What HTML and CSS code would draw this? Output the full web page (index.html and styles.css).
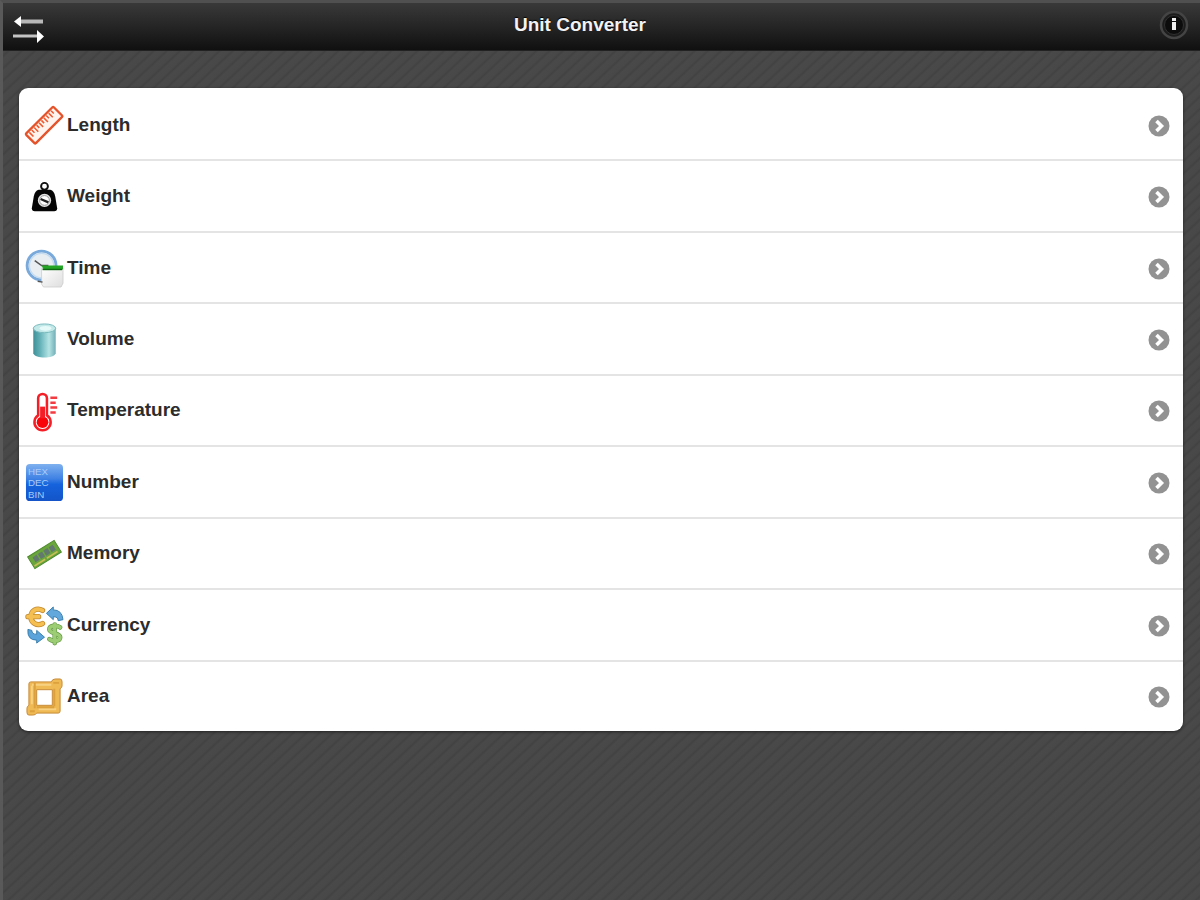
FILE: index.html
```html
<!DOCTYPE html>
<html lang="en">
<head>
<meta charset="utf-8">
<meta name="viewport" content="width=device-width, initial-scale=1">
<title>Unit Converter</title>
<link rel="stylesheet" href="styles.css">
</head>
<body>
<svg class="defs" aria-hidden="true">
  <defs>
    <symbol id="chevron" viewBox="0 0 22 22"><circle cx="11" cy="11" r="10.5" fill="#929292"/><path d="M8.500 6 13.500 11 8.500 16" fill="none" stroke="#fff" stroke-width="3.600"/></symbol>
  </defs>
</svg>
<header class="bar">
  <button class="bar-button" type="button" aria-label="Swap units">
    <svg width="32" height="30" viewBox="0 0 32 30"><path d="M7 7.500h24" stroke="#b8b8b8" stroke-width="4"/><path d="M2 7.500 9 2v11z" fill="#fff"/><path d="M1 22h24" stroke="#c4c4c4" stroke-width="3"/><path d="M32 22.500 25 16v13z" fill="#fff"/></svg>
  </button>
  <h1 class="title">Unit Converter</h1>
  <button class="bar-button info" type="button" aria-label="Information">
    <svg width="32" height="32" viewBox="0 0 32 32"><circle cx="16" cy="16" r="13" fill="#1c1c1c" stroke="#444" stroke-width="2.500"/><circle cx="16" cy="16" r="9.500" fill="#0c0c0c" stroke="#303030"/><path d="M16 9v3M16 13v8" stroke="#eee" stroke-width="4"/></svg>
  </button>
</header>
<main class="page">
  <nav class="list" aria-label="Unit categories">
    <a class="row" href="#length"><svg class="icon" viewBox="0 0 40 40"><g transform="rotate(-45 20 20)"><rect x="0" y="12.500" width="40" height="14" rx="1" fill="#fff5ee" stroke="#e5532b" stroke-width="2.400"/><path d="M4 14v6M7.500 14v4M11 14v6M14.500 14v4M18 14v6M21.500 14v4M25 14v6M28.500 14v4M32 14v6M35.500 14v4" stroke="#f05a32" stroke-width="1.600"/></g></svg><span class="label">Length</span><svg class="chevron"><use href="#chevron"/></svg></a>
    <a class="row" href="#weight"><svg class="icon" viewBox="0 0 40 40"><circle cx="20" cy="8.500" r="3.500" fill="none" stroke="#111" stroke-width="2"/><path d="M14 12h12q4 1 5 7l2 12q0 3-3 3H10q-3 0-3-3l2-12q1-6 5-7z" fill="#050505"/><circle cx="20" cy="23" r="6.800" fill="#e2e2e2"/><circle cx="20" cy="23" r="5" fill="#fff" stroke="#999"/><path d="M16 21.500 24 25" stroke="#222" stroke-width="2.400"/></svg><span class="label">Weight</span><svg class="chevron"><use href="#chevron"/></svg></a>
    <a class="row" href="#time"><svg class="icon" viewBox="0 0 40 40"><defs><linearGradient id="paper" x2="1" y2="1"><stop stop-color="#fff"/><stop offset="1" stop-color="#dedede"/></linearGradient></defs><circle cx="17" cy="17" r="14.800" fill="#e9eef2" stroke="#7aaadb" stroke-width="3"/><circle cx="17" cy="17" r="12.500" fill="none" stroke="#c5dcf0" stroke-width="1.500"/><path d="M10 12l7 5h7" fill="none" stroke="#555" stroke-width="1.600"/><path d="M17 20h22v15l-2 4H19l-2-3z" fill="url(#paper)" stroke="#ccc" stroke-width=".800"/><path d="M17 17h22v4H19z" fill="#25a526"/><path d="M18 21h20" stroke="#0c6813" stroke-width="1.500"/><path d="M13 33l5 1" stroke="#555" stroke-width="1.500"/></svg><span class="label">Time</span><svg class="chevron"><use href="#chevron"/></svg></a>
    <a class="row" href="#volume"><svg class="icon" viewBox="0 0 40 40"><defs><linearGradient id="teal"><stop stop-color="#3d8f97"/><stop offset=".300" stop-color="#63b1b7"/><stop offset=".700" stop-color="#b5e4e4"/><stop offset="1" stop-color="#70afb5"/></linearGradient></defs><path d="M8.500 7v26c2 6 21 6 23 0V7z" fill="url(#teal)"/><ellipse cx="20" cy="7.500" rx="11.500" ry="4.500" fill="#c2e8e8" stroke="#78b9bd"/><ellipse cx="21" cy="7.500" rx="6" ry="2.500" fill="#e6fafa"/></svg><span class="label">Volume</span><svg class="chevron"><use href="#chevron"/></svg></a>
    <a class="row" href="#temperature"><svg class="icon" viewBox="0 0 40 40"><path d="M13.500 24V6.500a4.500 4.500 0 0 1 9 0V24a8.300 8.300 0 1 1-9 0z" fill="#fff" stroke="#f51e26" stroke-width="2.600"/><circle cx="18" cy="31" r="6" fill="#f90509"/><path d="M15.500 15h5v12h-5z" fill="#f51e26"/><path d="M26 6h7M26 11h5.500M26 16h7M26 21h5.500" stroke="#f33b42" stroke-width="2.600"/></svg><span class="label">Temperature</span><svg class="chevron"><use href="#chevron"/></svg></a>
    <a class="row" href="#number"><svg class="icon" viewBox="0 0 40 40"><defs><linearGradient id="blue" x2="0" y2="1"><stop stop-color="#7fb1ef"/><stop offset=".400" stop-color="#3f81e4"/><stop offset=".550" stop-color="#1563dd"/><stop offset="1" stop-color="#1454c8"/></linearGradient></defs><rect x="1" y="1" width="38" height="38" rx="4" fill="url(#blue)"/><g class="icon-text"><text x="3" y="12">HEX</text><text x="3" y="24">DEC</text><text x="3" y="36">BIN</text></g></svg><span class="label">Number</span><svg class="chevron"><use href="#chevron"/></svg></a>
    <a class="row" href="#memory"><svg class="icon" viewBox="0 0 40 40"><g transform="rotate(-32 20 20)"><path d="M4 13h32v14H4z" fill="#6aa63c" stroke="#4c8a2b"/><path d="M8 16h5v6H8zm6.500 0h5v6h-5zm6.500 0h5v6h-5zm6.500 0h5v6h-5z" fill="#63786f"/><path d="M5 24.500h30" stroke="#c6bd54" stroke-width="1.600" stroke-dasharray="13 2"/></g></svg><span class="label">Memory</span><svg class="chevron"><use href="#chevron"/></svg></a>
    <a class="row" href="#currency"><svg class="icon" viewBox="0 0 40 40"><g fill="none" stroke-linecap="round" stroke-linejoin="round"><path d="M18 4.500C12 1 6 5 6 11s6 10 12 7M3 11h11" stroke="#c28b30" stroke-width="5.400"/><path d="M18 4.500C12 1 6 5 6 11s6 10 12 7M3 11h11" stroke="#f6bf52" stroke-width="3.800"/><path d="M36 22c-4-3-11-2-11 2s11 4 11 8-7 5-11 2M30.500 19v19" stroke="#679b48" stroke-width="4.800"/><path d="M36 22c-4-3-11-2-11 2s11 4 11 8-7 5-11 2M30.500 19v19" stroke="#9ccd74" stroke-width="3.400"/></g><path d="M22 7.500 29 1v3q9 0 10 10l-5 1q0-4-5-4v3z" fill="#62a8dc" stroke="#397ead"/><path d="M3 24l4 1q0 4 5 4v-4l8 7-8 6v-3Q2 35 3 24z" fill="#5aa4db" stroke="#397ead"/></svg><span class="label">Currency</span><svg class="chevron"><use href="#chevron"/></svg></a>
    <a class="row" href="#area"><svg class="icon" viewBox="0 0 40 40"><path d="M4 6q0-2 2-2h21q1-3 4-3h5q2 0 2 3v4q0 2-2 3v23q0 2-2 2H12q-1 2-4 2H4q-2 0-2-3v-4q0-2 2-3zM12 12v16h16V12z" fill="#efb954" fill-rule="evenodd" stroke="#c68a38"/><path d="M7 7h20M7 8v19M14 32h18" stroke="#f8d282" stroke-width="2"/><path d="M10 5v26M30 11v18M12 30h18M29 5h6M5 34h5" fill="none" stroke="#dca03d" stroke-width="2"/></svg><span class="label">Area</span><svg class="chevron"><use href="#chevron"/></svg></a>
  </nav>
</main>
</body>
</html>
```
FILE: styles.css
```css
* { box-sizing: border-box; }

body {
  margin: 0;
  min-height: 100vh;
  border-top: 3px solid #505050;
  border-left: 3px solid #595959;
  background: repeating-linear-gradient(137deg, #494949 0, #484848 5px, #424242 7px, #494949 9px);
  font-family: "Liberation Sans", Arial, sans-serif;
  font-size: 19px;
  font-weight: 700;
}

.defs { position: absolute; width: 0; height: 0; }

.bar {
  display: flex;
  align-items: center;
  justify-content: space-between;
  height: 48px;
  padding: 0 10px 0 9px;
  background: linear-gradient(#393939, #252525 50%, #101010);
  border-bottom: 1px solid #222;
}

.bar-button {
  display: flex;
  padding: 4px 0 0;
  border: 0;
  background: none;
  cursor: pointer;
}

.bar-button.info { padding: 0 0 4px; }

.title {
  margin: 0;
  padding: 0 42px 4px 0;
  flex: 1;
  text-align: center;
  color: #f2f2f2;
  font-size: 19px;
  line-height: 24px;
  text-shadow: 0 -1px 1px #000;
}

.page { padding: 37px 17px 37px 16px; }

.list {
  display: grid;
  grid-auto-rows: 1fr;
  min-height: 643px;
  overflow: hidden;
  border-radius: 9px;
  background: #fff;
  box-shadow: 0 1px 3px #222;
}

.row {
  display: flex;
  align-items: center;
  gap: 3px;
  padding: 2px 13px 0 6px;
  border-top: 2px solid #e4e4e4;
  color: #2c2c2c;
  text-decoration: none;
}

.row:first-child { border-top-color: transparent; }

.icon { width: 39px; height: 39px; flex: none; overflow: visible; }

.label { flex: 1; padding-bottom: 2px; line-height: 24px; }

.chevron { width: 22px; height: 22px; flex: none; }

.icon-text {
  fill: #a9cbfa;
  font-size: 10px;
  font-weight: 400;
}
```
